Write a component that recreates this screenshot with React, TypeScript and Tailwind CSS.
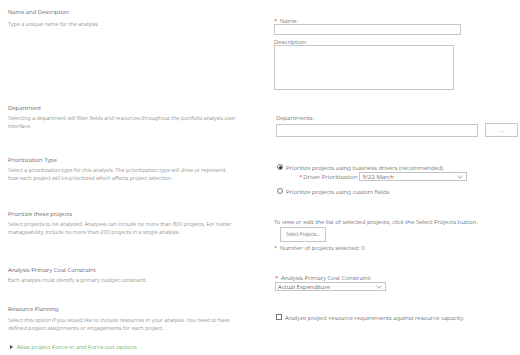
import React from "react";

const heading = "text-[6px] leading-[10px] text-[#2f2f2f]";
const desc = "text-[5.5px] leading-[8px] text-[#6e6e6e]";
const field = "text-[6.1px] leading-[7px] text-[#3f3f3f]";

function Req() {
  return <span className="text-[#c00] mr-[1px]">*</span>;
}

function Chevron() {
  return (
    <svg width="6" height="4" viewBox="0 0 6 4" className="shrink-0">
      <path d="M0.5 0.8 L3 3.2 L5.5 0.8" fill="none" stroke="#777" strokeWidth="0.7" />
    </svg>
  );
}

function Select({ value, width }: { value: string; width: string }) {
  return (
    <div className={`${width} h-[9px] border border-[#c4c4c4] bg-white flex items-center justify-between pl-[2px] pr-[3px] ${field}`}>
      <span className="text-[#333]">{value}</span>
      <Chevron />
    </div>
  );
}

function Radio({ checked }: { checked?: boolean }) {
  return (
    <span className="w-[6px] h-[6px] rounded-full border border-[#777] bg-white flex items-center justify-center shrink-0">
      {checked && <span className="w-[3px] h-[3px] rounded-full bg-[#333]" />}
    </span>
  );
}

function Section({
  title,
  lines,
  height,
  descGap,
  rightPad,
  children,
}: {
  title: string;
  lines: string[];
  height: string;
  descGap: string;
  rightPad: string;
  children?: React.ReactNode;
}) {
  return (
    <div className={`flex ${height}`}>
      <div className="w-[266px] pl-2 pt-[1px] shrink-0">
        <div className={heading}>{title}</div>
        <div className={`${desc} ${descGap}`}>
          {lines.map((l) => (
            <div key={l}>{l}</div>
          ))}
        </div>
      </div>
      <div className={`flex-1 ${rightPad}`}>{children}</div>
    </div>
  );
}

export default function App() {
  return (
    <div className="w-[520px] h-[355px] overflow-hidden bg-white pt-[6px] font-['Noto_Sans',sans-serif] font-light">
      <Section
        title="Name and Description"
        lines={["Type a unique name for the analysis."]}
        height="h-[96px]"
        descGap="mt-[3px]"
        rightPad="pt-[11px] pl-[8px]"
      >
        <div className={field}>
          <Req /> Name:
        </div>
        <div className="w-[187px] h-[11px] border border-[#c6c6c6] bg-white" />
        <div className={`${field} mt-[3px]`}>Description:</div>
        <div className="w-[180px] h-[45px] border border-[#c6c6c6] bg-white" />
      </Section>

      <Section
        title="Department"
        lines={[
          "Selecting a department will filter fields and resources throughout the portfolio analysis user",
          "interface.",
        ]}
        height="h-[52px]"
        descGap="mt-[1px]"
        rightPad="pt-[12px] pl-[10px]"
      >
        <div className={field}>Departments:</div>
        <div className="flex items-start gap-[7px] mt-[3px]">
          <div className="w-[202px] h-[13px] border border-[#c6c6c6] bg-white" />
          <button className="w-[33px] h-[14px] -mt-[1px] border border-[#c6c6c6] bg-[#fdfdfd] text-[5px] leading-[6px] text-[#555]">
            ...
          </button>
        </div>
      </Section>

      <Section
        title="Prioritization Type"
        lines={[
          "Select a prioritization type for this analysis. The prioritization type will drive or represent",
          "how each project will be prioritized which affects project selection.",
        ]}
        height="h-[54px]"
        descGap="mt-[1px]"
        rightPad="pt-[9px] pl-[11px]"
      >
        <div className={`flex items-center gap-[3px] h-[8px] ${field}`}>
          <Radio checked />
          <span>Prioritize projects using business drivers (recommended)</span>
        </div>
        <div className={`flex items-center h-[9px] mt-[1px] pl-[22px] ${field}`}>
          <Req />
          <span className="mr-[1px]">Driver Prioritization:</span>
          <Select value="3/22 March" width="w-[108px]" />
        </div>
        <div className={`flex items-center gap-[3px] h-[8px] mt-[6px] ${field}`}>
          <Radio />
          <span>Prioritize projects using custom fields</span>
        </div>
      </Section>

      <Section
        title="Prioritize these projects"
        lines={[
          "Select projects to be analyzed. Analyses can include no more than 800 projects. For better",
          "manageability, include no more than 200 projects in a single analysis.",
        ]}
        height="h-[56px]"
        descGap="mt-[1px]"
        rightPad="pt-[10px] pl-[8px]"
      >
        <div className={`${field} leading-[8px]`}>
          To view or edit the list of selected projects, click the Select Projects button.
        </div>
        <button className="ml-[6px] mt-[1px] w-[46px] h-[15px] border border-[#c6c6c6] bg-[#fdfdfd] text-[4.6px] text-[#444] block">
          Select Projects...
        </button>
        <div className={`${field} mt-[2px]`}>
          <Req /> Number of projects selected: 0
        </div>
      </Section>

      <Section
        title="Analysis Primary Cost Constraint"
        lines={["Each analysis must identify a primary budget constraint."]}
        height="h-[39px]"
        descGap="mt-[1px]"
        rightPad="pt-[10px] pl-[9px]"
      >
        <div className={`${field} leading-[8px]`}>
          <Req /> Analysis Primary Cost Constraint:
        </div>
        <Select value="Actual Expenditure" width="w-[111px]" />
      </Section>

      <Section
        title="Resource Planning"
        lines={[
          "Select this option if you would like to include resources in your analysis. You need to have",
          "defined project assignments or engagements for each project.",
        ]}
        height="h-[40px]"
        descGap="mt-[2px]"
        rightPad="pt-[10px] pl-[10px]"
      >
        <div className={`flex items-center gap-[3px] h-[8px] ${field}`}>
          <span className="w-[6px] h-[6px] border border-[#777] bg-white shrink-0" />
          <span>Analyze project resource requirements against resource capacity.</span>
        </div>
      </Section>

      <div className="flex items-center gap-[4px] pl-[10px] h-[8px] text-[6.1px] text-[#4a9a2c]">
        <svg width="3" height="4" viewBox="0 0 3 4">
          <path d="M0 0 L3 2 L0 4 Z" fill="#444" />
        </svg>
        <span>Alias project Force-in and Force-out options</span>
      </div>
    </div>
  );
}
